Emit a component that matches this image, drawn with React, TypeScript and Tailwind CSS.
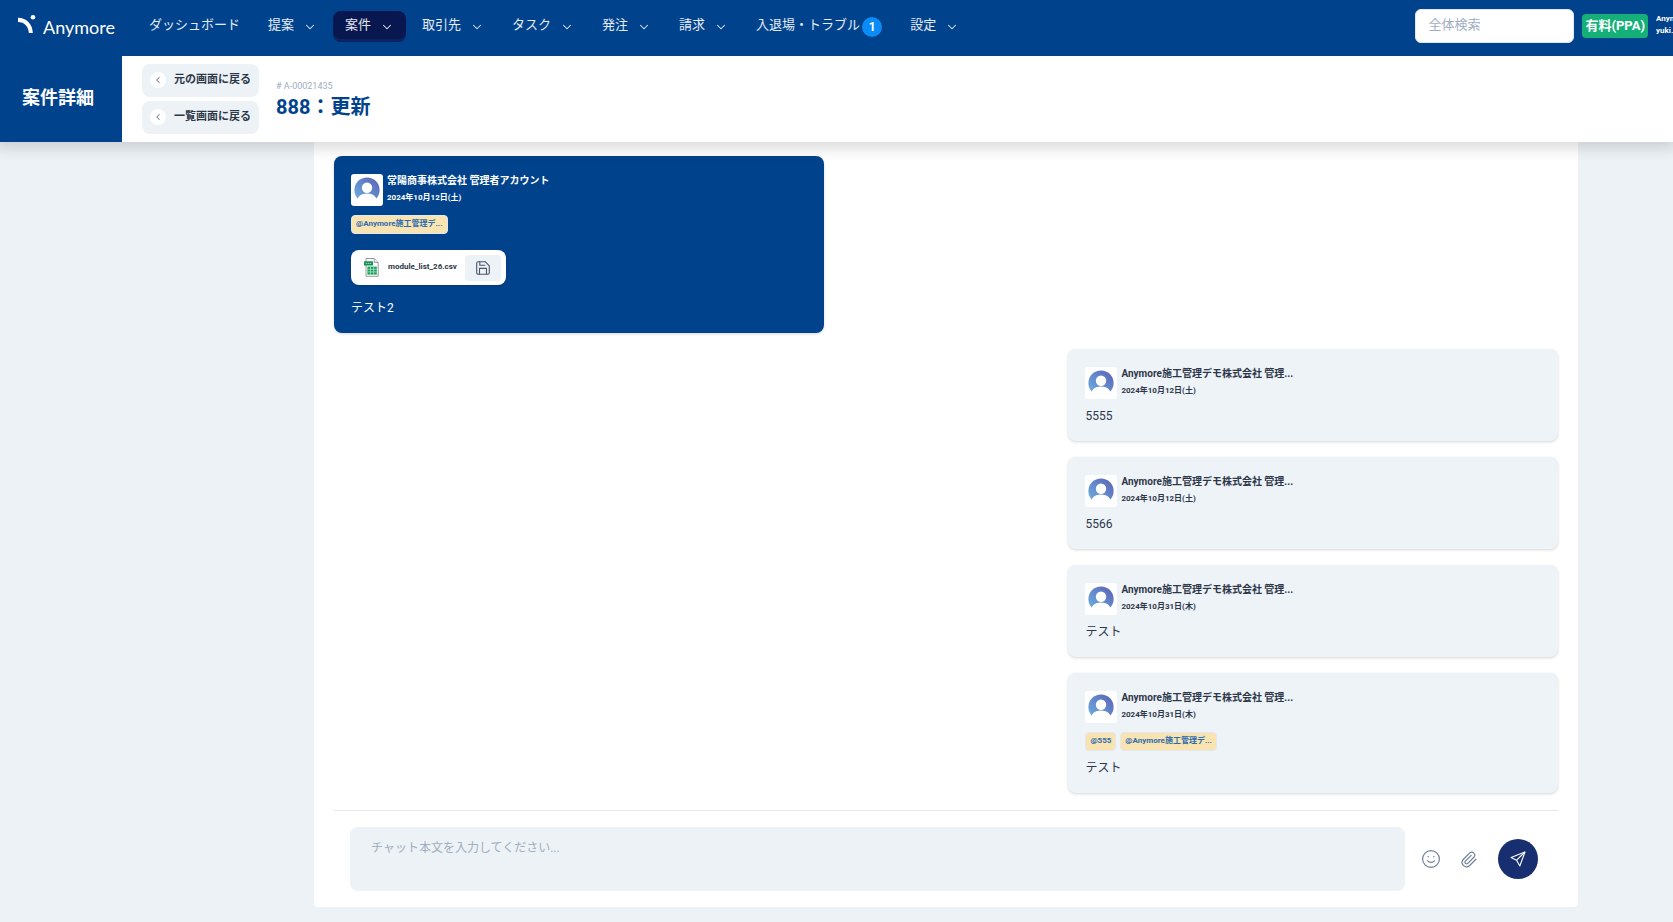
import React from "react";
import { ChevronDown, ChevronLeft } from "lucide-react";

type Message = {
  name: string;
  date: string;
  body: string;
  tags?: string[];
  file?: string;
  mine?: boolean;
};

const navItems: { label: string; menu?: boolean; active?: boolean; badge?: number }[] = [
  { label: "ダッシュボード" },
  { label: "提案", menu: true },
  { label: "案件", menu: true, active: true },
  { label: "取引先", menu: true },
  { label: "タスク", menu: true },
  { label: "発注", menu: true },
  { label: "請求", menu: true },
  { label: "入退場・トラブル", badge: 1 },
  { label: "設定", menu: true },
];

const messages: Message[] = [
  {
    name: "常陽商事株式会社 管理者アカウント",
    date: "2024年10月12日(土)",
    body: "テスト2",
    tags: ["@Anymore施工管理デ..."],
    file: "module_list_26.csv",
  },
  { name: "Anymore施工管理デモ株式会社 管理...", date: "2024年10月12日(土)", body: "5555", mine: true },
  { name: "Anymore施工管理デモ株式会社 管理...", date: "2024年10月12日(土)", body: "5566", mine: true },
  { name: "Anymore施工管理デモ株式会社 管理...", date: "2024年10月31日(木)", body: "テスト", mine: true },
  {
    name: "Anymore施工管理デモ株式会社 管理...",
    date: "2024年10月31日(木)",
    body: "テスト",
    tags: ["@555", "@Anymore施工管理デ..."],
    mine: true,
  },
];

function Logo() {
  return (
    <a href="#" className="flex h-9 w-[119px] shrink-0 items-start gap-[7px] pt-[6px] text-white">
      <svg width="18" height="19" viewBox="0 0 18 19" fill="currentColor" aria-hidden="true">
        <path d="M0 2.8C8.6 2.8 14.8 9.6 14.8 18H10.8C10.8 11.9 6.3 7 0 7Z" />
        <circle cx="15" cy="2.3" r="2.3" />
      </svg>
      <span className="font-[Lato] text-lg leading-6">Anymore</span>
    </a>
  );
}

function Avatar({ id }: { id: string }) {
  return (
    <span className="flex size-8 shrink-0 items-center justify-center rounded-[3px] bg-white">
      <svg width="26" height="26" viewBox="0 0 26 26" aria-hidden="true">
        <defs>
          <linearGradient id={id} x1="0" y1="1" x2="1" y2="0">
            <stop offset="0" stopColor="#6db4e4" />
            <stop offset="1" stopColor="#5b5fb4" />
          </linearGradient>
        </defs>
        <circle cx="13" cy="13" r="12.6" fill={`url(#${id})`} />
        <circle cx="13" cy="10.7" r="5.2" fill="#fff" />
        <path d="M2.6 26C2.8 19.5 7.2 16.4 13 16.4S23.2 19.5 23.4 26Z" fill="#fff" />
      </svg>
    </span>
  );
}

function CsvIcon() {
  return (
    <svg width="15" height="19" viewBox="0 0 15 19" aria-hidden="true">
      <path d="M2 .5H10.2L14.2 4.5V18.3H2Z" fill="#fff" stroke="#8a8f94" strokeWidth=".9" />
      <path d="M10.2 .5V4.5H14.2" fill="#e5e7e9" stroke="#8a8f94" strokeWidth=".8" />
      <rect x="0" y="3.2" width="9" height="4.4" rx=".6" fill="#169154" />
      <path d="M1.8 5.4H7.2" stroke="#fff" strokeWidth="1" strokeDasharray="1.4 .6" opacity=".65" />
      <rect x="3.4" y="8.6" width="9.4" height="8" fill="#14a35c" />
      <path d="M3.4 11.3H12.8M3.4 13.9H12.8M6.5 8.6V16.6M9.7 8.6V16.6" stroke="#fff" strokeWidth=".5" />
    </svg>
  );
}

function SaveIcon() {
  return (
    <svg width="14" height="14" viewBox="0 0 14 14" fill="none" stroke="#4a5568" strokeWidth="1.1" strokeLinejoin="round" strokeLinecap="round" aria-hidden="true">
      <path d="M2.2.7H9.2L13.3 4.8V11.8A1.5 1.5 0 0 1 11.8 13.3H2.2A1.5 1.5 0 0 1 .7 11.8V2.2A1.5 1.5 0 0 1 2.2.7Z" />
      <path d="M3.5 13V7.4H10.5V13M3.8.9V4.2H8.8" />
    </svg>
  );
}

function MessageCard({ message, id }: { message: Message; id: string }) {
  const { name, date, body, tags, file, mine } = message;
  return (
    <article
      className={
        mine
          ? "w-2/5 self-end rounded-lg bg-[#eef3f8] px-[17px] pt-[18px] pb-4 text-[#2d3748] shadow-[0_1px_3px_rgba(0,0,0,0.16)]"
          : "w-2/5 self-start rounded-lg bg-[#00428c] px-[17px] pt-[18px] pb-4 text-white shadow-[0_1px_3px_rgba(0,0,0,0.16)]"
      }
    >
      <header className="flex gap-1">
        <Avatar id={id} />
        <div className="font-bold">
          <p className="text-[10px] leading-[14px]">{name}</p>
          <p className="mt-1 text-[8px] leading-3">{date}</p>
        </div>
      </header>
      {tags && (
        <div className="mt-[9px] flex gap-1">
          {tags.map((tag) => (
            <a key={tag} href="#" className="h-[19px] rounded border border-[#e2e8f0] bg-[#f9e3b1] px-1 text-[8px] leading-4 font-bold text-[#2b6cb0]">
              {tag}
            </a>
          ))}
        </div>
      )}
      {file && (
        <div className="mt-4 flex">
          <div className="flex h-[35px] items-center rounded-lg bg-white pr-[5px] pl-[13px] shadow">
            <CsvIcon />
            <span className="ml-[9px] pb-[2px] text-[8px] font-bold text-[#2d3748]">{file}</span>
            <button type="button" aria-label="保存" className="ml-2 flex h-[26px] w-9 items-center justify-center rounded bg-[#edf2f7]">
              <SaveIcon />
            </button>
          </div>
        </div>
      )}
      <p className={file ? "mt-[14px] text-xs leading-[18px]" : "mt-2 text-xs leading-[18px]"}>{body}</p>
    </article>
  );
}

function BackButton({ label }: { label: string }) {
  return (
    <button type="button" className="flex h-[33px] items-start gap-2 rounded-lg bg-[#edf2f7] px-2 pt-2 text-[11px] leading-4 font-bold text-[#2d3748]">
      <span className="flex size-4 items-center justify-center rounded-full bg-white text-[#718096]">
        <ChevronLeft size={10} strokeWidth={2.5} />
      </span>
      {label}
    </button>
  );
}

export default function App() {
  return (
    <div className="min-h-screen overflow-x-hidden bg-[#edf2f7] font-[Roboto,'Noto_Sans_CJK_JP',sans-serif]">
      <div className="relative shadow-[0_2px_14px_4px_rgba(0,0,0,0.15)]">
        <header className="flex h-14 items-start justify-between bg-[#00428c] pl-[18px]">
          <div className="flex shrink-0 items-start pt-[9px]">
            <Logo />
            <nav className="flex gap-1 pt-[2px]">
              {navItems.map((item) => (
                <a
                  key={item.label}
                  href="#"
                  className={
                    item.active
                      ? "flex h-[31px] items-center rounded-lg bg-[#08174f] px-3 text-[13px] text-white/90 shadow-[inset_0_-3px_0_#0d2462]"
                      : "flex h-[31px] items-center rounded-lg px-3 text-[13px] text-white/90"
                  }
                >
                  <span className="pb-1 leading-5">{item.label}</span>
                  {item.menu && <ChevronDown className="ml-[9px]" size={14} strokeWidth={1.8} />}
                  {item.badge && (
                    <span className="ml-[2px] flex size-5 items-center justify-center rounded-full bg-[#0a8bf5] text-xs font-bold text-white">{item.badge}</span>
                  )}
                </a>
              ))}
            </nav>
          </div>
          <div className="flex shrink-0 items-start pt-[9px]">
            <input
              type="search"
              aria-label="全体検索"
              placeholder="全体検索"
              className="h-[34px] w-[159px] rounded-md border border-[#e2e8f0] bg-white px-3 pb-1 text-[13px] placeholder:text-[#a0aec0]"
            />
            <span className="mt-[5px] ml-2 h-6 rounded bg-[#15b079] px-[3px] text-[13px] leading-6 font-bold text-white">有料(PPA)</span>
            <div className="mt-1 ml-2 w-[17px] overflow-hidden text-[8px] leading-3 font-bold whitespace-nowrap text-white">
              <p>Anym</p>
              <p>yuki.</p>
            </div>
          </div>
        </header>
        <div className="flex h-[86px] bg-white">
          <h1 className="flex w-[122px] items-center justify-center bg-[#00428c] pr-[6px] pb-[2px] text-lg font-bold text-white">案件詳細</h1>
          <div className="ml-5 flex flex-col gap-1 pt-2">
            <BackButton label="元の画面に戻る" />
            <BackButton label="一覧画面に戻る" />
          </div>
          <div className="ml-[17px] pt-6">
            <p className="text-[9px] leading-3 text-[#a0aec0]"># A-00021435</p>
            <h2 className="text-xl leading-[30px] font-bold text-[#00428c]">888：更新</h2>
          </div>
        </div>
      </div>
      <main className="pr-[95px] pb-[15px] pl-[314px]">
        <section className="rounded-b bg-white px-5 pt-[14px] pb-4">
          <div className="flex flex-col gap-4">
            {messages.map((message, index) => (
              <MessageCard key={index} message={message} id={`avatar-${index}`} />
            ))}
          </div>
          <form className="mt-[17px] flex items-center border-t border-[#e2e8f0] pt-4 pr-5 pl-4">
            <textarea
              aria-label="チャット本文"
              placeholder="チャット本文を入力してください..."
              className="h-16 flex-1 resize-none rounded-lg bg-[#edf2f7] px-[21px] py-3 text-xs leading-[18px] placeholder:text-[#a0aec0]"
            />
            <button type="button" aria-label="絵文字" className="ml-4 p-[1px] text-[#718096]">
              <svg width="18" height="18" viewBox="0 0 18 18" fill="none" stroke="currentColor" strokeLinecap="round">
                <circle cx="9" cy="9" r="8.4" strokeWidth="1.2" />
                <path d="M5.6 10.8C6.8 13 11.2 13 12.4 10.8" strokeWidth="1.2" />
                <path d="M6.2 6.7V6.8M11.8 6.7V6.8" strokeWidth="1.5" />
              </svg>
            </button>
            <button type="button" aria-label="ファイル添付" className="ml-5 text-[#718096]">
              <svg width="16" height="17" viewBox="0 0 16 17" fill="none" stroke="currentColor" strokeWidth="1.2" strokeLinecap="round" strokeLinejoin="round">
                <path d="M15 8.3L8.4 14.7A4.4 4.4 0 0 1 2.2 8.5L8.9 1.8A3 3 0 0 1 13.1 6L6.8 12.4A1.6 1.6 0 0 1 4.5 10.1L10.2 4.4" />
              </svg>
            </button>
            <button type="button" aria-label="送信" className="ml-[21px] flex size-10 items-center justify-center rounded-full bg-[#172f70] text-white">
              <svg width="16" height="16" viewBox="0 0 16 16" fill="none" stroke="currentColor" strokeWidth="1.1" strokeLinejoin="round">
                <path d="M15 1L1 6.4L6.6 9.2L9.8 15Z" />
                <path d="M15 1L6.6 9.2" />
              </svg>
            </button>
          </form>
        </section>
      </main>
    </div>
  );
}
